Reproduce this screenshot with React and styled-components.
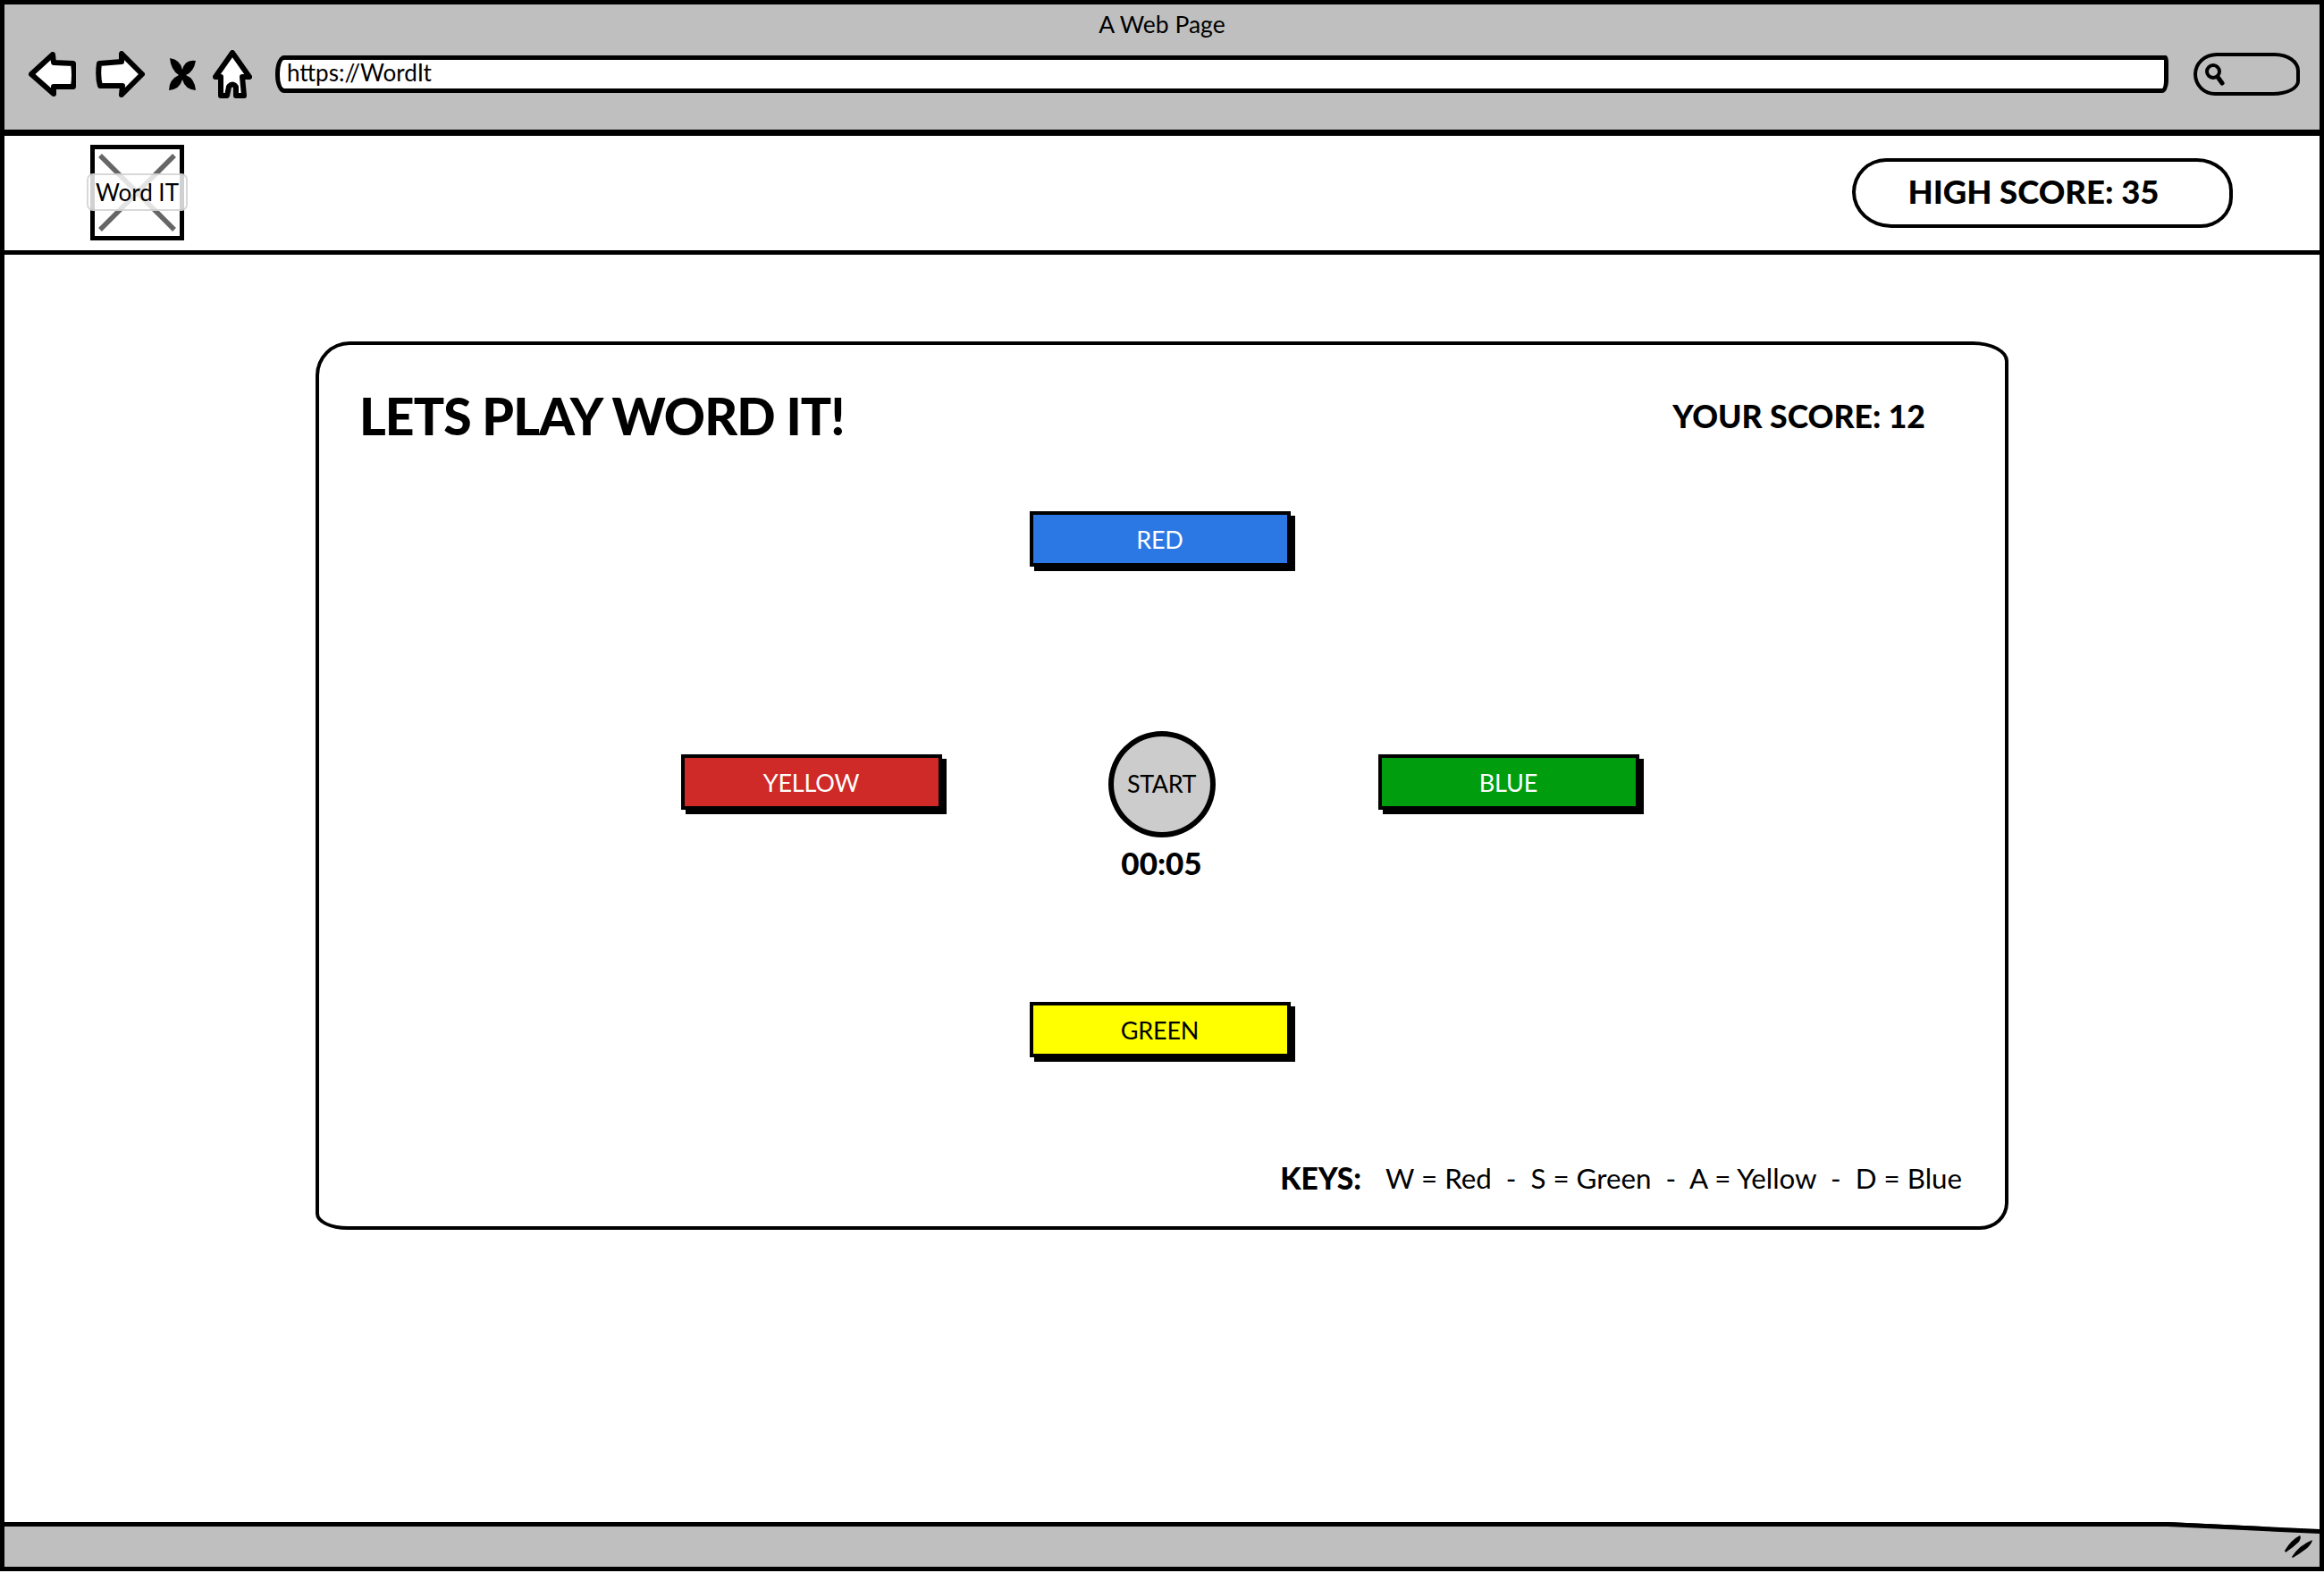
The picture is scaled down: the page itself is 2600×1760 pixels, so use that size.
import React from "react";
import styled, { createGlobalStyle } from "styled-components";

const Global = createGlobalStyle`
  html, body { margin: 0; padding: 0; background: #fff; }
  * { box-sizing: border-box; }
  body { font-family: "Lato", "Open Sans", sans-serif; color: #000; }
`;

const Win = styled.div`
  width: 2600px;
  height: 1760px;
  padding-bottom: 2px;
  display: flex;
  flex-direction: column;
`;
const Frame = styled.div`
  flex: 1;
  display: flex;
  flex-direction: column;
  border: 5px solid #000;
  min-height: 0;
`;
const Toolbar = styled.header`
  height: 147px;
  flex: none;
  background: #bfbfbf;
  border-bottom: 7px solid #000;
  display: flex;
  flex-direction: column;
`;
const Title = styled.div`
  height: 43px;
  padding-top: 6px;
  line-height: 32px;
  text-align: center;
  font-size: 26.5px;
`;
const NavRow = styled.div`
  height: 70px;
  display: flex;
  align-items: center;
  padding: 0 22px 0 27px;
`;
const NavIcon = styled.svg`
  flex: none;
  margin-right: ${(p) => p.$gap}px;
`;
const Url = styled.div`
  flex: 1;
  height: 42px;
  background: #fff;
  border: 5px solid #000;
  border-radius: 10px 3px 7px 10px / 20px 8px 14px 20px;
  font-size: 26px;
  line-height: 29px;
  padding-left: 8px;
  overflow: hidden;
`;
const Search = styled.div`
  flex: none;
  width: 119px;
  height: 48px;
  margin-left: 28px;
  border: 4px solid #000;
  border-radius: 26px 28px 30px 24px / 24px 20px 16px 24px;
  display: flex;
  align-items: center;
  padding-left: 7px;
`;
const Nav = styled.nav`
  height: 133px;
  padding: 10px 97px 0 96px;
  border-bottom: 5px solid #000;
  display: flex;
  justify-content: space-between;
  align-items: flex-start;
  flex: none;
`;
const Logo = styled.div`
  position: relative;
  width: 105px;
  height: 107px;
  border: 5px solid #000;
  background: #fff;
`;
const LogoCross = styled.svg`
  display: block;
  width: 100%;
  height: 100%;
`;
const LogoLabel = styled.span`
  position: absolute;
  left: -9px;
  top: 27px;
  width: 113px;
  height: 42px;
  border: 2px solid rgba(190, 190, 190, 0.6);
  border-radius: 7px;
  background: rgba(255, 255, 255, 0.82);
  font-size: 26px;
  line-height: 38px;
  text-align: center;
  white-space: nowrap;
`;
const HighScore = styled.div`
  width: 426px;
  height: 78px;
  margin-top: 15px;
  padding: 0 20px 5px 0;
  border: 4px solid #000;
  border-radius: 38px 40px 36px 44px / 38px 36px 34px 40px;
  display: flex;
  align-items: center;
  justify-content: center;
  font-size: 36.5px;
  font-weight: 900;
`;
const Main = styled.main`
  flex: 1;
  display: flex;
  justify-content: center;
  padding-top: 97px;
  min-height: 0;
`;
const Card = styled.section`
  width: 1894px;
  height: 994px;
  border: 4px solid #000;
  border-radius: 38px 40px 32px 36px / 38px 22px 30px 18px;
  display: flex;
  flex-direction: column;
  padding: 49px 48px 34px 45px;
`;
const CardHead = styled.div`
  height: 60px;
  display: flex;
  justify-content: space-between;
  align-items: center;
  padding-right: 41px;
`;
const Heading = styled.h1`
  margin: 0;
  font-size: 57px;
  font-weight: 900;
  line-height: 60px;
  letter-spacing: -0.9px;
`;
const Score = styled.div`
  font-size: 35.6px;
  font-weight: 900;
`;
const Pad = styled.div`
  margin-top: 77px;
  display: grid;
  grid-template-columns: repeat(3, 292px);
  grid-template-rows: 61px 185px 167px 136px 62px;
  column-gap: 98px;
  justify-content: center;
  transform: translateX(-1px);
`;
const Key = styled.button`
  grid-column: ${(p) => p.$col};
  grid-row: ${(p) => p.$row};
  align-self: start;
  width: 292px;
  height: 62px;
  margin-top: ${(p) => p.$top || 0}px;
  background: ${(p) => p.$bg};
  color: ${(p) => p.$fg};
  border: 4px solid #000;
  box-shadow: 5px 5px 0 #000;
  font-family: inherit;
  font-size: 27px;
  letter-spacing: -0.2px;
  padding: 0;
`;
const Centre = styled.div`
  grid-column: 2;
  grid-row: 3;
  display: flex;
  flex-direction: column;
  align-items: center;
  transform: translateX(2px);
`;
const Start = styled.button`
  width: 120px;
  height: 119px;
  flex: none;
  border-radius: 50%;
  border: 6px solid #000;
  background: #ccc;
  font-family: inherit;
  font-size: 27px;
  letter-spacing: -0.4px;
  padding: 0 0 2px;
  color: #000;
`;
const Timer = styled.div`
  margin-top: 6px;
  font-size: 35px;
  font-weight: 900;
  line-height: 44px;
`;
const Legend = styled.div`
  margin-top: auto;
  display: flex;
  justify-content: flex-end;
  align-items: center;
  height: 40px;
  font-size: 31.3px;
  white-space: pre;
`;
const LegendLabel = styled.strong`
  font-weight: 900;
  font-size: 33.5px;
  margin-right: 27px;
`;
const Footer = styled.footer`
  position: relative;
  flex: none;
  height: 50px;
  background: #bfbfbf;
  border-top: 5px solid #000;
  display: flex;
  justify-content: flex-end;
  align-items: center;
  padding-right: 7px;
`;
const FooterTilt = styled.svg`
  position: absolute;
  right: 0;
  top: -5px;
  width: 170px;
  height: 14px;
`;

export default function App() {
  return (
    <Win>
      <Global />
      <Frame>
        <Toolbar>
          <Title>A Web Page</Title>
          <NavRow>
            <NavIcon $gap={21} width="53" height="50" viewBox="0 0 53 50">
              <path d="M3 25 L27 3 L28 12 L50 13 Q52 26 50 39 L28 39 L28 47 Z" fill="#fff" stroke="#000" strokeWidth="6" strokeLinejoin="round" />
            </NavIcon>
            <NavIcon $gap={26} width="56" height="52" viewBox="0 0 56 52">
              <path d="M53 26 L30 3 L30 12 L5 14 Q3 28 6 39 L31 39 L30 49 Z" fill="#fff" stroke="#000" strokeWidth="6" strokeLinejoin="round" />
            </NavIcon>
            <NavIcon $gap={18} width="32" height="38" viewBox="0 0 32 38">
              <path d="M2 1 Q14 3 16 14 Q19 2 31 4 Q29 16 20 20 Q30 24 31 37 Q19 36 16 25 Q13 36 1 37 Q1 25 12 20 Q3 14 2 1 Z" fill="#000" />
            </NavIcon>
            <NavIcon $gap={26} width="44" height="54" viewBox="0 0 44 54">
              <path d="M22 3 L41 30 L33 30 L35 51 L26 51 L26 41 Q22 36 18 41 L16 51 L9 51 L9 30 L3 30 Z" fill="#fff" stroke="#000" strokeWidth="6" strokeLinejoin="round" />
            </NavIcon>
            <Url>https://WordIt</Url>
            <Search>
              <svg width="24" height="26" viewBox="0 0 24 26">
                <circle cx="11" cy="10" r="7" fill="none" stroke="#000" strokeWidth="4" />
                <path d="M16 16 L21 23" stroke="#000" strokeWidth="5" strokeLinecap="round" />
              </svg>
            </Search>
          </NavRow>
        </Toolbar>
        <Nav>
          <Logo>
            <LogoCross viewBox="0 0 95 97">
              <path d="M6 7 L89 90 M89 7 L6 90" stroke="#666" strokeWidth="5.5" />
            </LogoCross>
            <LogoLabel>Word IT</LogoLabel>
          </Logo>
          <HighScore>HIGH SCORE: 35</HighScore>
        </Nav>
        <Main>
          <Card>
            <CardHead>
              <Heading>LETS PLAY WORD IT!</Heading>
              <Score>YOUR SCORE: 12</Score>
            </CardHead>
            <Pad>
              <Key $col={2} $row={1} $bg="#2b78e4" $fg="#fff">RED</Key>
              <Key $col={1} $row={3} $top={26} $bg="#cf2a27" $fg="#fff">YELLOW</Key>
              <Centre>
                <Start>START</Start>
                <Timer>00:05</Timer>
              </Centre>
              <Key $col={3} $row={3} $top={26} $bg="#009e0f" $fg="#fff">BLUE</Key>
              <Key $col={2} $row={5} $bg="#ffff00" $fg="#000">GREEN</Key>
            </Pad>
            <Legend>
              <LegendLabel>KEYS:</LegendLabel>
              W = Red  -  S = Green  -  A = Yellow  -  D = Blue
            </Legend>
          </Card>
        </Main>
        <Footer>
          <FooterTilt viewBox="0 0 170 14">
            <polygon points="0,0 170,0 170,8" fill="#fff" />
            <polygon points="0,0 170,8 170,13 0,5" fill="#000" />
          </FooterTilt>
          <svg width="33" height="27" viewBox="0 0 33 27">
            <path d="M1 18 Q8 6 18 1 Q20 3 17 8 Q11 14 2 20 Z M9 25 Q17 12 32 6 Q31 11 25 16 Q17 22 10 26 Z" fill="#000" />
          </svg>
        </Footer>
      </Frame>
    </Win>
  );
}
